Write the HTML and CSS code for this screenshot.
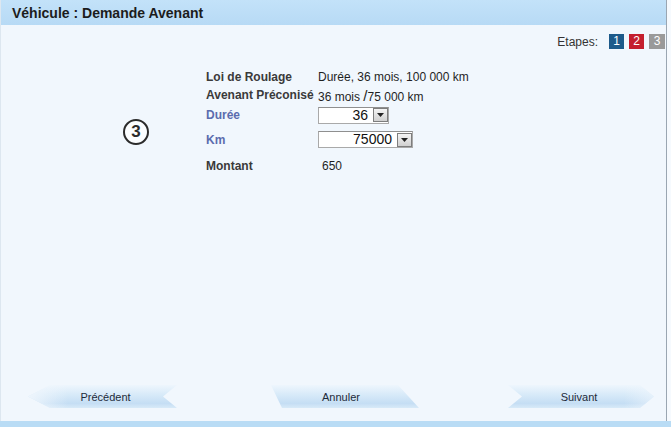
FILE: index.html
```html
<!DOCTYPE html>
<html lang="fr">
<head>
<meta charset="utf-8">
<title>Véhicule : Demande Avenant</title>
<link rel="stylesheet" href="styles.css">
</head>
<body>
<div class="window">
  <div class="panel">
    <div class="header">Véhicule : Demande Avenant</div>
    <div class="steps">
      <span class="steps-label">Etapes:</span>
      <span class="step step-1">1</span>
      <span class="step step-2">2</span>
      <span class="step step-3">3</span>
    </div>
    <div class="content">
      <div class="badge">3</div>
      <div class="form">
        <div class="row r1"><span class="label">Loi de Roulage</span><span class="value">Durée, 36 mois, 100 000 km</span></div>
        <div class="row r2"><span class="label">Avenant Préconisé</span><span class="value">36 mois <span class="slash">/</span>75 000 km</span></div>
        <div class="row r3"><span class="label blue">Durée</span>
          <span class="select sel-duree"><span class="sel-text">36</span><span class="sel-btn"><svg width="7" height="4" viewBox="0 0 7 4"><path d="M0 0h7L3.5 4z" fill="#222"/></svg></span></span>
        </div>
        <div class="row r4"><span class="label blue">Km</span>
          <span class="select sel-km"><span class="sel-text">75000</span><span class="sel-btn"><svg width="7" height="4" viewBox="0 0 7 4"><path d="M0 0h7L3.5 4z" fill="#222"/></svg></span></span>
        </div>
        <div class="row r5"><span class="label">Montant</span><span class="value v650">650</span></div>
      </div>
    </div>
    <div class="footer">
      <div class="btn btn-prev">Précédent</div>
      <div class="btn btn-cancel">Annuler</div>
      <div class="btn btn-next">Suivant</div>
    </div>
  </div>
  <div class="bottom-strip"></div>
</div>
</body>
</html>
```

FILE: styles.css
```css
html, body {
  margin: 0;
  padding: 0;
  width: 671px;
  height: 427px;
  overflow: hidden;
  background: #f6fafe;
  font-family: "Liberation Sans", Arial, sans-serif;
}
.window {
  width: 671px;
  height: 427px;
  display: flex;
  flex-direction: column;
}
.panel {
  width: 667px;
  height: 421px;
  background: #f1f7fd;
  border-right: 1px solid #9aa6b2;
  border-left: 1px solid #dde7f0;
  box-sizing: border-box;
  display: flex;
  flex-direction: column;
}
.header {
  height: 25px;
  box-sizing: border-box;
  padding: 5px 0 0 11px;
  background: linear-gradient(to bottom, #c3e2f9, #b7daf5);
  font-size: 14px;
  line-height: 16px;
  font-weight: bold;
  color: #1c1c1c;
}
.steps {
  margin-top: 9px;
  height: 15px;
  display: flex;
  align-items: center;
  justify-content: flex-end;
  padding-right: 1px;
}
.steps-label {
  font-size: 12px;
  color: #333;
  margin-right: 11px;
}
.step {
  width: 15px;
  height: 15px;
  margin-left: 5px;
  color: #fff;
  font-size: 12px;
  line-height: 15px;
  text-align: center;
}
.step-1 { background: #1d5a8a; margin-left: 0; }
.step-2 { background: #c41f2e; }
.step-3 { background: #9a9a9a; width: 16px; }
.content {
  margin-top: 19px;
  display: flex;
  padding-left: 122px;
}
.badge {
  margin-top: 51px;
  width: 22px;
  height: 22px;
  border: 2px solid #2b2b2b;
  border-radius: 50%;
  font-size: 17px;
  font-weight: bold;
  color: #2b2b2b;
  line-height: 22px;
  text-align: center;
  background: #fbfdff;
}
.form {
  margin-left: 57px;
  font-size: 12px;
}
.row {
  display: flex;
  align-items: center;
}
.r1 { height: 18px; }
.r2 { height: 18px; }
.r3 { height: 22px; }
.r4 { height: 27px; }
.r5 { height: 26px; }
.label {
  width: 112px;
  font-weight: bold;
  color: #3a3a3a;
  white-space: nowrap;
}
.label.blue { color: #5b6cae; }
.value { color: #1f1f1f; white-space: nowrap; }
.slash { font-size: 15px; }
.v650 { padding-left: 4px; }
.select {
  display: flex;
  align-items: center;
  height: 17px;
  box-sizing: border-box;
  border: 1px solid #a9a9a9;
  border-top-color: #8f8f8f;
  background: #fff;
}
.sel-duree { width: 71px; }
.sel-km { width: 95px; }
.sel-text {
  flex: 1;
  text-align: right;
  font-size: 14px;
  color: #111;
  padding-right: 5px;
  line-height: 15px;
}
.sel-btn {
  width: 15px;
  height: 14px;
  margin-right: 0;
  box-sizing: border-box;
  border: 1px solid #7d7d7d;
  background: linear-gradient(to bottom, #f4f4f4, #d0d0d0);
  display: flex;
  align-items: center;
  justify-content: center;
}
.footer {
  margin-top: auto;
  margin-bottom: 13px;
  height: 23px;
  display: flex;
}
.btn {
  height: 23px;
  display: flex;
  align-items: center;
  justify-content: center;
  font-size: 11px;
  color: #1d2a3a;
  box-sizing: border-box;
  background: linear-gradient(to bottom, #eef6fd 0%, #d6e9f8 45%, #c5def4 80%, #d8eaf8 100%);
}
.btn-prev {
  margin-left: 27px;
  width: 149px;
  padding-left: 6px;
  clip-path: polygon(0 50%, 22px 0, 149px 0, 135px 50%, 149px 100%, 22px 100%);
  background: linear-gradient(to right, rgba(241,247,253,0.9) 0px, rgba(241,247,253,0) 40px), linear-gradient(to bottom, #eef6fd 0%, #d6e9f8 45%, #c5def4 80%, #d8eaf8 100%);
}
.btn-cancel {
  margin-left: 94px;
  width: 148px;
  padding-right: 8px;
  clip-path: polygon(0 0, 127px 0, 148px 100%, 11px 100%);
}
.btn-next {
  margin-left: 89px;
  width: 146px;
  padding-left: 0;
  padding-right: 4px;
  clip-path: polygon(0 0, 132px 0, 146px 50%, 132px 100%, 0 100%, 14px 50%);
  background: linear-gradient(to left, rgba(241,247,253,0.6) 0px, rgba(241,247,253,0) 30px), linear-gradient(to bottom, #eef6fd 0%, #d6e9f8 45%, #c5def4 80%, #d8eaf8 100%);
}
.bottom-strip {
  height: 6px;
  width: 671px;
  background: #b9dcf5;
}
```
